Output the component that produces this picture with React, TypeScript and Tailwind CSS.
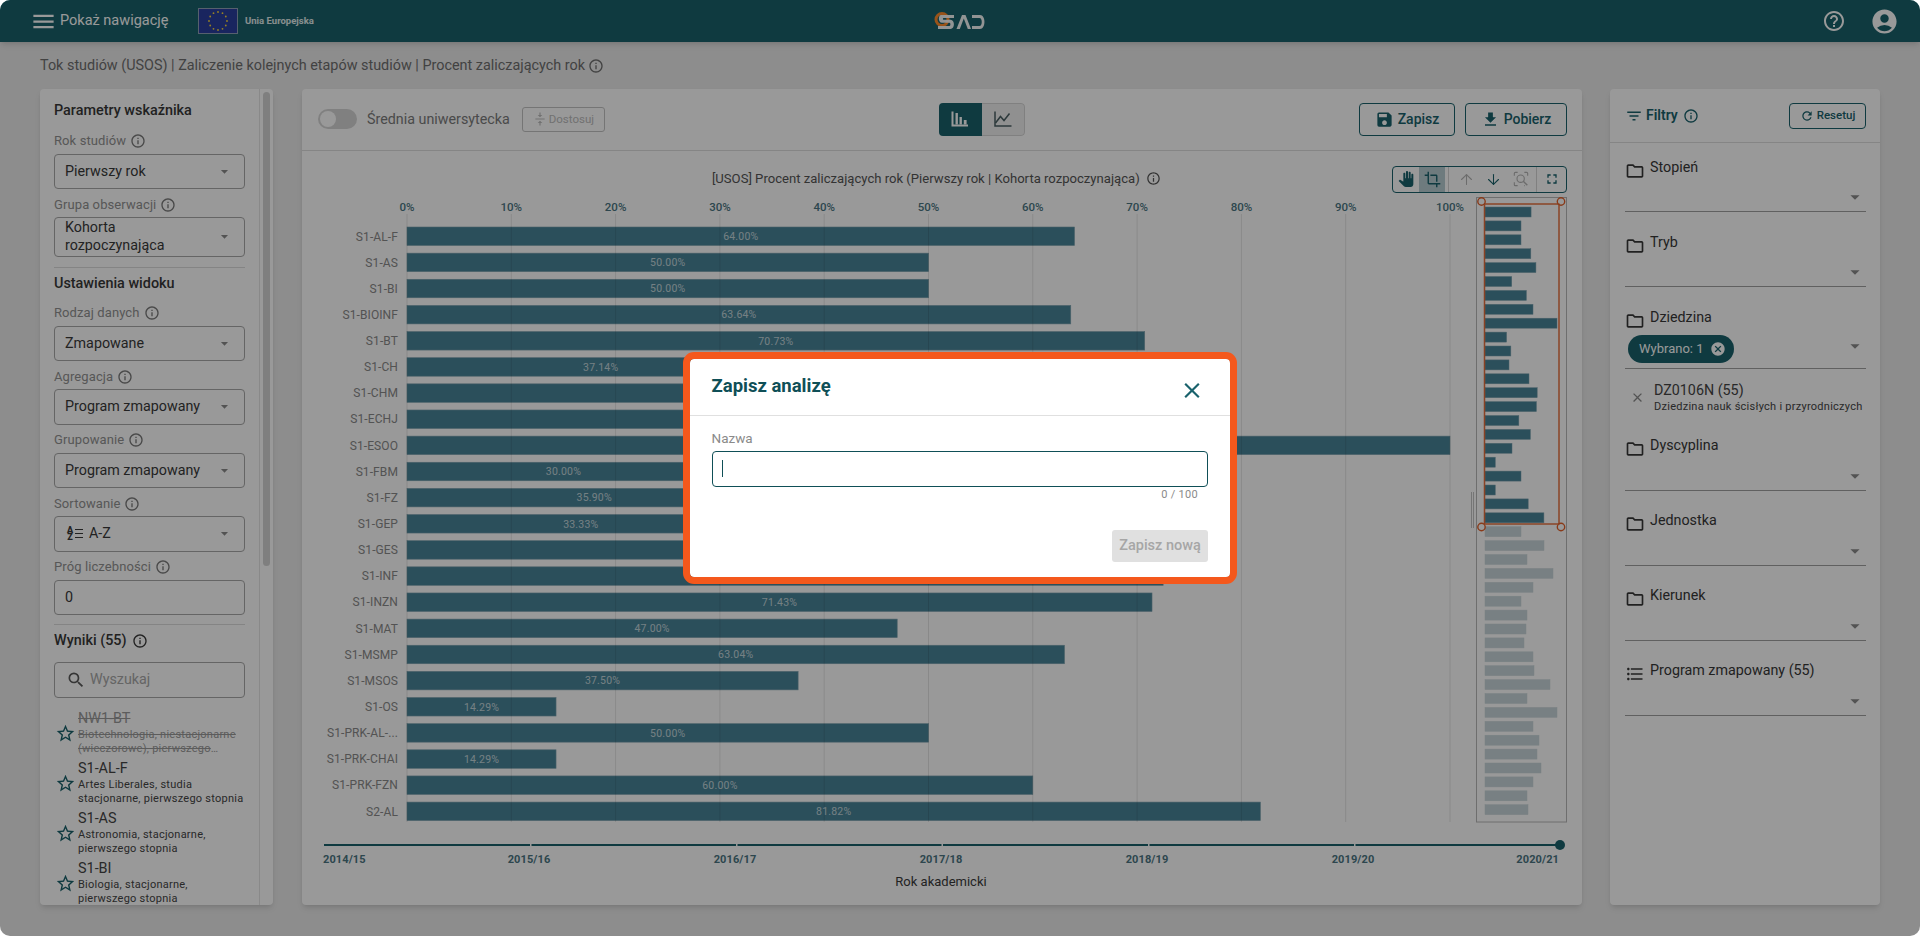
import React from "react";
import {
  MdMenu, MdInfoOutline, MdSave, MdFileDownload, MdPanTool, MdCrop,
  MdFullscreen, MdOutlineFolder, MdFilterList, MdRefresh, MdCancel, MdClose, MdSearch, MdStarBorder,
  MdFormatListBulleted, MdVerticalAlignCenter, MdHelpOutline, MdAccountCircle, MdArrowDropDown,
} from "react-icons/md";
import { ArrowUp, ArrowDown } from "lucide-react";

const BARS: [string, number, string?][] = [
  ["S1-AL-F", 64], ["S1-AS", 50], ["S1-BI", 50], ["S1-BIOINF", 63.64], ["S1-BT", 70.73], ["S1-CH", 37.14],
  ["S1-CHM", 57.5], ["S1-ECHJ", 66.67], ["S1-ESOO", 100], ["S1-FBM", 30], ["S1-FZ", 35.9], ["S1-GEP", 33.33],
  ["S1-GES", 61.11], ["S1-INF", 72.5], ["S1-INZN", 71.43], ["S1-MAT", 47], ["S1-MSMP", 63.04], ["S1-MSOS", 37.5],
  ["S1-OS", 14.29], ["S1-PRK-AL-...", 50], ["S1-PRK-CHAI", 14.29], ["S1-PRK-FZN", 60], ["S2-AL", 81.82],
];
const REST = [36, 59, 42, 68, 48, 36, 42, 41, 39, 48, 49, 65, 42, 72, 48, 54, 52, 56, 48, 42, 43];
const TICKS = [0, 10, 20, 30, 40, 50, 60, 70, 80, 90, 100];
const YEARS: [string, number][] = [["2015/16", 529], ["2016/17", 735], ["2017/18", 941], ["2018/19", 1147], ["2019/20", 1353]];
const px = (v: number) => 407 + v * 10.43;

function Info({ size = 16, className = "" }: { size?: number; className?: string }) {
  return <MdInfoOutline size={size} className={className} />;
}

function Label({ children }: { children: React.ReactNode }) {
  return (
    <div className="flex h-[18px] items-center gap-[4px] text-[13px] tracking-[0.1px] text-[#919191]">
      {children}
      <Info className="text-[#7a7a7a]" />
    </div>
  );
}

function Select({ children, tall, input }: { children: React.ReactNode; tall?: boolean; input?: boolean }) {
  return (
    <div className={`mt-[3.5px] flex items-center justify-between rounded border border-[#a8a8a8] pl-[10px] pr-[11px] text-[14.3px] text-[#3a3a3a] ${tall ? "h-[39.5px] leading-[17.5px]" : "h-[35.5px]"}`}>
      <div className="flex items-center">{children}</div>
      {!input && <MdArrowDropDown size={17} className="shrink-0 text-[#8a8a8a]" />}
    </div>
  );
}

function Field({ label, children, tall, input }: { label: string; children: React.ReactNode; tall?: boolean; input?: boolean }) {
  return (
    <div className="mb-[6.5px]">
      <Label>{label}</Label>
      <Select tall={tall} input={input}>{children}</Select>
    </div>
  );
}

function Heading({ children, info }: { children: React.ReactNode; info?: boolean }) {
  return (
    <div className="flex h-5 items-center gap-[5px] text-[14.4px] font-medium text-[#383838]">
      {children}
      {info && <Info className="text-[#383838]" />}
    </div>
  );
}

function Result({ code, desc, off }: { code: string; desc: string; off?: boolean }) {
  return (
    <div className="flex h-[50px] shrink-0 items-center">
      <MdStarBorder size={21} className="ml-[1px] mr-[2px] shrink-0 text-[#19626c]" />
      <div className={`w-[167px] ${off ? "text-[#9a9a9a] line-through" : "text-[#454545]"}`}>
        <div className="h-[18px] text-[14.4px] leading-[18px]">{code}</div>
        <div className="line-clamp-2 text-[11px] leading-[14.3px] tracking-[0.25px]">{desc}</div>
      </div>
    </div>
  );
}

function Filter({ label, icon, children, grow }: { label: string; icon?: React.ReactNode; children?: React.ReactNode; grow?: boolean }) {
  return (
    <div className="mb-[20px]">
      <div className="flex h-5 items-center gap-[5px] pt-[1px] text-[14.3px] text-[#383838]">
        <span className="flex w-5 translate-y-[3px] justify-center">{icon ?? <MdOutlineFolder size={20} className="text-[#383838]" />}</span>
        {label}
      </div>
      <div className={`flex items-center justify-between border-b border-[#a0a0a0] ${grow ? "h-[41.5px] pt-[3px]" : "h-[35px]"}`}>
        <div className="pl-[3px]">{children}</div>
        <MdArrowDropDown size={22} className={`text-[#8a8a8a] ${grow ? "-translate-y-[3px]" : "translate-y-[3px]"}`} />
      </div>
    </div>
  );
}

function BarIcon() {
  return (
    <svg width="18" height="16" viewBox="0 0 18 16" fill="#ffffff" className="block">
      <path d="M0.500 0.500h2v13h14.500v2H0.500z" />
      <path d="M4.500 2h2.400v11.500H4.500zM8.500 6h2.400v7.500H8.500zM12.800 9h2.800v4.500h-2.800z" />
    </svg>
  );
}

function LineIcon() {
  return (
    <svg width="18" height="16" viewBox="0 0 18 16" fill="none" stroke="#4a5f63" strokeWidth="1.500" className="block">
      <path d="M1 0.500V15h16.500" />
      <path d="M1.500 12 6.500 5.500l3.500 4 5.500-7" />
    </svg>
  );
}

function ZoomScan() {
  return (
    <svg width="16" height="16" viewBox="0 0 24 24" fill="none" stroke="#b5b5b5" strokeWidth="1.700">
      <path d="M2 7V3.500A1.500 1.500 0 0 1 3.500 2H7M17 2h3.500A1.500 1.500 0 0 1 22 3.500V7M2 17v3.500A1.500 1.500 0 0 0 3.500 22H7M17 22h1" />
      <circle cx="11.500" cy="11.500" r="5.500" />
      <path d="M15.500 15.500 21.500 21.500" strokeWidth="2.200" />
    </svg>
  );
}

function Chart() {
  const mini = [...BARS.map((b) => b[1] * 0.72), ...REST];
  return (
    <svg viewBox="302 193 1280 712" width="1280" height="712" className="block" fontFamily="Roboto, sans-serif">
      {TICKS.map((t) => (
        <text key={t} x={px(t)} y="211" textAnchor="middle" fontSize="11.500" fontWeight="500" fill="#4b7683">{t}%</text>
      ))}
      {BARS.map(([n, v], i) => {
        const y = 227 + i * 26.14;
        return (
          <g key={n}>
            <rect x="407" y={y} width={v * 10.43} height="18.500" fill="#498498" stroke="#7ea3b0" strokeWidth="0.600" />
            <text x="398" y={y + 13.500} textAnchor="end" fontSize="12" fill="#8a8a8a" letterSpacing="0.100">{n}</text>
          </g>
        );
      })}
      {TICKS.map((t) => (
        <line key={t} x1={px(t)} x2={px(t)} y1="214" y2="822" stroke="#000000" strokeOpacity="0.100" />
      ))}
      {BARS.map(([n, v], i) => (
        <text key={n} x={407 + (v * 10.43) / 2} y={227 + i * 26.14 + 13} textAnchor="middle" fontSize="10.500" fill="#e4ecef" fillOpacity="0.800" letterSpacing="0.200">{v.toFixed(2)}%</text>
      ))}

      <rect x="1476.500" y="197.500" width="90" height="624.500" fill="none" stroke="#b8b8b8" />
      {mini.map((w, i) => (
        <rect key={i} x="1485" y={207 + i * 13.9} width={w} height="10" fill={i < 23 ? "#498498" : "#c8d5da"} stroke={i < 23 ? "#7ea3b0" : "#cbd8dc"} strokeWidth="0.500" />
      ))}
      <rect x="1484.500" y="204" width="74.500" height="320" fill="none" stroke="#e4622b" strokeOpacity="0.900" strokeWidth="1.500" />
      {[[1481.500, 201.500], [1561, 201.500], [1481.500, 527], [1561, 527]].map(([cx, cy], i) => (
        <circle key={i} cx={cx} cy={cy} r="3.700" fill="#fff" fillOpacity="0.300" stroke="#e4622b" strokeWidth="1.400" />
      ))}
      <path d="M1471.500 492v36M1473.500 492v36" stroke="#c4c4c4" />

      <line x1="324" x2="1560" y1="845" y2="845" stroke="#19626c" strokeWidth="2" />
      {[530, 736, 941.500, 1148, 1354].map((x) => <rect key={x} x={x} y="843.500" width="1.500" height="3" fill="#ffffff" />)}
      <circle cx="1560" cy="845" r="5" fill="#19626c" />
      <text x="323" y="863" fontSize="11" fontWeight="700" fill="#4b7683" letterSpacing="0.100">2014/15</text>
      {YEARS.map(([t, x]) => (
        <text key={t} x={x} y="863" textAnchor="middle" fontSize="11" fontWeight="700" fill="#4b7683" letterSpacing="0.100">{t}</text>
      ))}
      <text x="1559" y="863" textAnchor="end" fontSize="11" fontWeight="700" fill="#4b7683" letterSpacing="0.100">2020/21</text>
      <text x="941" y="886" textAnchor="middle" fontSize="13" fill="#3a3a3a">Rok akademicki</text>
    </svg>
  );
}

function Logo() {
  return (
    <svg width="52" height="20" viewBox="0 0 52 20" fill="none" className="block">
      <circle cx="8" cy="8.500" r="6" stroke="#ff8a2a" strokeWidth="3" />
      <path d="M7 4h13v3H9.500c-.8 0-.8 1.800 0 1.800h7c4.600 0 4.600 9.200 0 9.200H4v-3h11.500c1.200 0 1.200-3.200 0-3.200H8C4 12 4 4 7 4z" fill="#ffffff" fillOpacity="0.950" />
      <path d="M22.500 18 28 4h3.500l5.500 14h-3.200L29.800 7.500 25.800 18z" fill="#ffffff" fillOpacity="0.950" />
      <path d="M38 4h8c6 0 6 14 0 14h-8v-3h7.500c3 0 3-8 0-8H38z" fill="#ffffff" fillOpacity="0.950" />
    </svg>
  );
}

function EuFlag() {
  const stars = Array.from({ length: 12 }, (_, i) => {
    const a = (i * Math.PI) / 6;
    return [20 + 9 * Math.sin(a), 13 - 9 * Math.cos(a)];
  });
  return (
    <svg width="40" height="26" viewBox="0 0 40 26" className="block">
      <rect x="0.500" y="0.500" width="39" height="25" fill="#2a3f9e" stroke="#8fa0b8" />
      {stars.map(([x, y], i) => <circle key={i} cx={x} cy={y} r="0.900" fill="#ffd83a" />)}
    </svg>
  );
}

export default function App() {
  return (
    <div className="relative flex h-[936px] w-[1920px] flex-col overflow-hidden rounded-[10px] bg-[#ebebeb] font-['Roboto',sans-serif]">
      <header className="flex h-[42px] shrink-0 items-center bg-[#19626c] shadow-md">
        <div className="flex w-[198px] items-center pl-[30px] text-[14.5px] text-white">
          <MdMenu size={27} className="mr-[3px] shrink-0" />
          Pokaż nawigację
        </div>
        <EuFlag />
        <span className="ml-[7px] w-[70px] whitespace-nowrap text-[9.5px] font-bold text-[#e4eeee]">Unia Europejska</span>
        <div className="ml-[619px]"><Logo /></div>
        <div className="ml-auto flex items-center gap-[24px] pr-[21.500px] text-white">
          <MdHelpOutline size={24} />
          <MdAccountCircle size={29} />
        </div>
      </header>

      <div className="flex h-[47px] shrink-0 items-center gap-[3px] pl-[40px] text-[14.4px] text-[#6f6f6f]">
        Tok studiów (USOS) | Zaliczenie kolejnych etapów studiów | Procent zaliczających rok
        <Info className="text-[#6f6f6f]" />
      </div>

      <div className="flex h-[816px] pl-[40px]">
        <aside className="relative flex w-[233px] overflow-hidden rounded bg-white shadow-md">
          <div className="w-[219.500px] shrink-0 border-r border-[#e4e4e4] px-[14px] pt-[12px]">
            <Heading>Parametry wskaźnika</Heading>
            <div className="mt-[11px]">
              <Field label="Rok studiów">Pierwszy rok</Field>
              <Field label="Grupa obserwacji" tall>Kohorta rozpoczynająca</Field>
            </div>
            <div className="mt-[10.5px] border-t border-[#dddddd]" />
            <div className="mt-[6px]"><Heading>Ustawienia widoku</Heading></div>
            <div className="mt-[10px]">
              <Field label="Rodzaj danych">Zmapowane</Field>
              <Field label="Agregacja">Program zmapowany</Field>
              <Field label="Grupowanie">Program zmapowany</Field>
              <Field label="Sortowanie">
                <span className="ml-[2px] mr-[2px] flex w-[6px] flex-col items-center text-[9px] font-black leading-[6.5px]"><span>A</span><span>Z</span></span>
                <svg width="8" height="11" viewBox="0 0 8 11" className="mr-[6px]" stroke="#3a3a3a" strokeWidth="1.200"><path d="M0 1.500h8M0 5.500h8M0 9.500h8" /></svg>
                A-Z
              </Field>
              <Field label="Próg liczebności" input>0</Field>
            </div>
            <div className="mt-[9px] border-t border-[#dddddd]" />
            <div className="mt-[6px]"><Heading info>Wyniki (55)</Heading></div>
            <div className="mt-[11px] flex h-[36px] items-center rounded border border-[#a8a8a8] pl-[11px] text-[14.3px] text-[#a8a8a8]">
              <MdSearch size={20} className="mr-[4px] text-[#5a5a5a]" />
              Wyszukaj
            </div>
            <div className="mt-[10px] flex flex-col">
              <Result off code="NW1-BT" desc="Biotechnologia, niestacjonarne (wieczorowe), pierwszego stopnia" />
              <Result code="S1-AL-F" desc="Artes Liberales, studia stacjonarne, pierwszego stopnia" />
              <Result code="S1-AS" desc="Astronomia, stacjonarne, pierwszego stopnia" />
              <Result code="S1-BI" desc="Biologia, stacjonarne, pierwszego stopnia" />
            </div>
          </div>
          <div className="ml-[3.500px] mt-[3px] h-[474px] w-[7px] rounded bg-[#d4d4d4]" />
        </aside>

        <main className="ml-[29px] w-[1280px] overflow-hidden rounded bg-white shadow-md">
          <div className="flex h-[61.500px] items-center border-b border-[#dedede] pl-[16px] pr-[15px]">
            <div className="relative h-[20px] w-[39px] rounded-full bg-[#d6d6d6]">
              <div className="absolute left-[2px] top-[2px] size-[16px] rounded-full bg-white" />
            </div>
            <span className="ml-[10px] text-[14.3px] text-[#7c7c7c]">Średnia uniwersytecka</span>
            <div className="ml-[12px] flex h-[25px] w-[83px] items-center justify-center gap-[2px] rounded-[3px] border border-[#c4c4c4] text-[11.500px] text-[#bdbdbd]">
              <MdVerticalAlignCenter size={14} />
              Dostosuj
            </div>
            <div className="ml-[334px] flex h-[33px] w-[86px] overflow-hidden rounded">
              <div className="flex w-[43px] items-center justify-center bg-[#19626c]"><BarIcon /></div>
              <div className="flex w-[43px] items-center justify-center rounded-r border border-l-0 border-[#d6d6d6] bg-[#f0f0f0]"><LineIcon /></div>
            </div>
            <div className="ml-auto flex gap-[10px] text-[14px] font-medium text-[#19626c]">
              <div className="flex h-[33px] w-[96px] items-center justify-center gap-[4px] rounded border border-[#19626c]"><MdSave size={19} />Zapisz</div>
              <div className="flex h-[33px] w-[102px] items-center justify-center gap-[4px] rounded border border-[#19626c]"><MdFileDownload size={19} />Pobierz</div>
            </div>
          </div>
          <div className="mt-[15px] flex h-[27px] items-center pl-[410px] pr-[15px]">
            <span className="flex items-center gap-[6px] text-[13.1px] text-[#555555]">
              [USOS] Procent zaliczających rok (Pierwszy rok | Kohorta rozpoczynająca)
              <Info size={15} className="text-[#555555]" />
            </span>
            <div className="ml-auto flex h-[27px] w-[175px] items-center overflow-hidden rounded border border-[#19626c] text-[#19626c]">
              <div className="flex w-[26px] justify-center pr-[1px]"><MdPanTool size={16} /></div>
              <div className="flex h-full w-[26px] items-center justify-center bg-[#b8cdd2]"><MdCrop size={17} /></div>
              <div className="ml-[3px] h-full border-l border-[#d5d5d5]" />
              <div className="ml-[4px] flex w-[27px] justify-center text-[#b5b5b5]"><ArrowUp size={17} strokeWidth={1.5} /></div>
              <div className="flex w-[27px] justify-center"><ArrowDown size={17} strokeWidth={1.5} /></div>
              <div className="flex w-[27px] justify-center"><ZoomScan /></div>
              <div className="ml-[2px] h-full border-l border-[#d5d5d5]" />
              <div className="flex w-[29px] justify-center"><MdFullscreen size={16} /></div>
            </div>
          </div>
          <Chart />
        </main>

        <aside className="ml-[28px] w-[270px] overflow-hidden rounded bg-white shadow-md">
          <div className="flex h-[54px] items-center justify-between border-b border-[#dedede] pl-[15px] pr-[14px] text-[#19626c]">
            <div className="flex items-center gap-[3px] text-[14px] font-semibold">
              <MdFilterList size={18} />
              Filtry
              <Info className="ml-[2px]" />
            </div>
            <div className="flex h-[26px] w-[77px] items-center justify-center gap-[3px] rounded border border-[#19626c] text-[11.500px] font-medium">
              <MdRefresh size={14} />
              Resetuj
            </div>
          </div>
          <div className="pl-[15px] pr-[14px] pt-[14px]">
            <Filter label="Stopień" />
            <Filter label="Tryb" />
            <div className="-mb-[20px]">
              <Filter label="Dziedzina" grow>
                <div className="flex h-[28px] w-[106px] items-center justify-between rounded-full bg-[#19626c] pl-[11px] pr-[8px] text-[13px] text-white">
                  Wybrano: 1
                  <MdCancel size={16} />
                </div>
              </Filter>
            </div>
            <div className="flex h-[67px]">
              <MdClose size={15} className="ml-[5px] mr-[9px] mt-[21.500px] text-[#8a8a8a]" />
              <div className="text-[#454545]">
                <div className="mt-[12px] h-[18px] text-[14.3px] leading-[18px]">DZ0106N (55)</div>
                <div className="mt-[1px] text-[11px] leading-[14px] tracking-[0.26px]">Dziedzina nauk ścisłych i przyrodniczych</div>
              </div>
            </div>
            <Filter label="Dyscyplina" />
            <Filter label="Jednostka" />
            <Filter label="Kierunek" />
            <Filter label="Program zmapowany (55)" icon={<MdFormatListBulleted size={20} className="text-[#383838]" />} />
          </div>
        </aside>
      </div>

      <div className="absolute inset-0 bg-black/40" />

      <div role="dialog" className="absolute left-[690px] top-[359px] h-[218px] w-[540px] rounded bg-white outline-[7px] outline-[#f4581c] outline-solid">
        <div className="flex h-[56.500px] items-center justify-between border-b border-[#e0e0e0] pl-[21.500px] pr-[25px]">
          <span className="text-[18.5px] font-bold text-[#0f4f57]">Zapisz analizę</span>
          <MdClose size={26} className="translate-y-[3.500px] text-[#19626c]" />
        </div>
        <div className="px-[22px] pt-[14px]">
          <div className="-ml-[0.5px] h-[16px] text-[13.500px] leading-[16px] text-[#8a8a8a]">Nazwa</div>
          <div className="mt-[5px] flex h-[36px] items-center rounded border border-[#0f4f57] pl-[9px]">
            <div className="h-[17px] w-px bg-[#0f4f57]" />
          </div>
          <div className="mt-[1px] h-[14px] pr-[10px] text-right text-[11px] leading-[14px] tracking-[0.3px] text-[#8a8a8a]">0 / 100</div>
          <div className="mt-[28px] flex justify-end">
            <div className="flex h-[32px] w-[96px] items-center justify-center rounded-[3px] bg-[#e0e0e0] text-[14.500px] font-medium text-[#a6a6a6]">Zapisz nową</div>
          </div>
        </div>
      </div>
    </div>
  );
}
